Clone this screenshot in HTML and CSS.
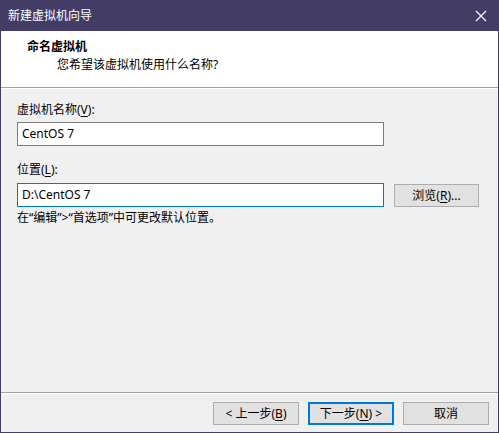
FILE: index.html
```html
<!DOCTYPE html>
<html lang="zh-CN">
<head>
<meta charset="utf-8">
<title>新建虚拟机向导</title>
<link rel="stylesheet" href="styles.css">
</head>
<body>
<div class="window">
  <div class="titlebar">
    <span class="title">新建虚拟机向导</span>
    <span class="close">
      <svg width="12" height="12" viewBox="0 0 12 12"><path d="M1 1 L11 11 M11 1 L1 11" stroke="#ffffff" stroke-width="1.2" fill="none"/></svg>
    </span>
  </div>
  <div class="header">
    <div class="h-title">命名虚拟机</div>
    <div class="h-sub">您希望该虚拟机使用什么名称?</div>
  </div>
  <div class="content">
    <label class="lbl">虚拟机名称(<u>V</u>):</label>
    <div class="row">
      <div class="input">CentOS 7</div>
    </div>
    <label class="lbl lbl2">位置(<u>L</u>):</label>
    <div class="row">
      <div class="input focus">D:\CentOS 7</div>
      <div class="btn browse">浏览(<u>R</u>)...</div>
    </div>
    <div class="hint">在“编辑”&gt;“首选项”中可更改默认位置。</div>
  </div>
  <div class="footer">
    <div class="btn">&lt; 上一步(<u>B</u>)</div>
    <div class="btn default">下一步(<u>N</u>) &gt;</div>
    <div class="btn">取消</div>
  </div>
</div>
</body>
</html>
```
FILE: styles.css
```css
html, body {
  margin: 0;
  padding: 0;
}
body {
  font-family: "Noto Sans", "Noto Sans CJK SC", sans-serif;
  font-size: 12px;
  color: #000;
}
.window {
  width: 499px;
  height: 433px;
  box-sizing: border-box;
  border: 1px solid #433d66;
  border-top: none;
  background: #f0f0f0;
  display: flex;
  flex-direction: column;
}
.titlebar {
  height: 31px;
  flex: none;
  background: #433d66;
  color: #fff;
  display: flex;
  align-items: center;
  justify-content: space-between;
  padding-left: 8px;
  margin: 0 -1px;
}
.title {
  font-size: 12px;
  line-height: 16px;
}
.close {
  width: 36px;
  height: 31px;
  display: flex;
  align-items: center;
  justify-content: center;
}
.close svg { display: block; }
.header {
  background: #fff;
  height: 57px;
  flex: none;
  border-bottom: 1px solid #a0a0a0;
  box-shadow: 0 1px 0 #ffffff;
  padding: 7px 0 0 26px;
  box-sizing: border-box;
}
.h-title {
  font-weight: bold;
  line-height: 18px;
}
.h-sub {
  padding-left: 30px;
  line-height: 18px;
}
.content {
  flex: 1;
  padding: 13px 0 0 16px;
  display: flex;
  flex-direction: column;
}
.lbl {
  line-height: 17px;
  margin-bottom: 4px;
}
.lbl2 {
  margin-top: 15px;
  margin-bottom: 5px;
}
.row {
  display: flex;
  align-items: center;
  gap: 10px;
}
.input {
  width: 367px;
  height: 24px;
  box-sizing: border-box;
  border: 1px solid #7a7a7a;
  background: #fff;
  padding: 0 4px;
  line-height: 22px;
  font-size: 12px;
}
.input.focus {
  border-color: #0078d7;
}
.btn {
  height: 23px;
  box-sizing: border-box;
  border: 1px solid #adadad;
  background: #e1e1e1;
  display: flex;
  align-items: center;
  justify-content: center;
  font-size: 12px;
}
.browse {
  width: 85px;
}
.hint {
  margin-top: 2px;
  line-height: 17px;
}
.footer {
  height: 40px;
  flex: none;
  border-top: 1px solid #a0a0a0;
  box-shadow: inset 0 1px 0 #ffffff;
  display: flex;
  justify-content: flex-end;
  align-items: center;
  gap: 9px;
  padding-right: 9px;
  padding-top: 1px;
  box-sizing: border-box;
}
.footer .btn {
  width: 86px;
}
.btn.default {
  border: 1px solid #0078d7;
  box-shadow: inset 0 0 0 1px #0078d7;
}
u {
  text-decoration: underline;
  text-underline-offset: 2px;
}
```
